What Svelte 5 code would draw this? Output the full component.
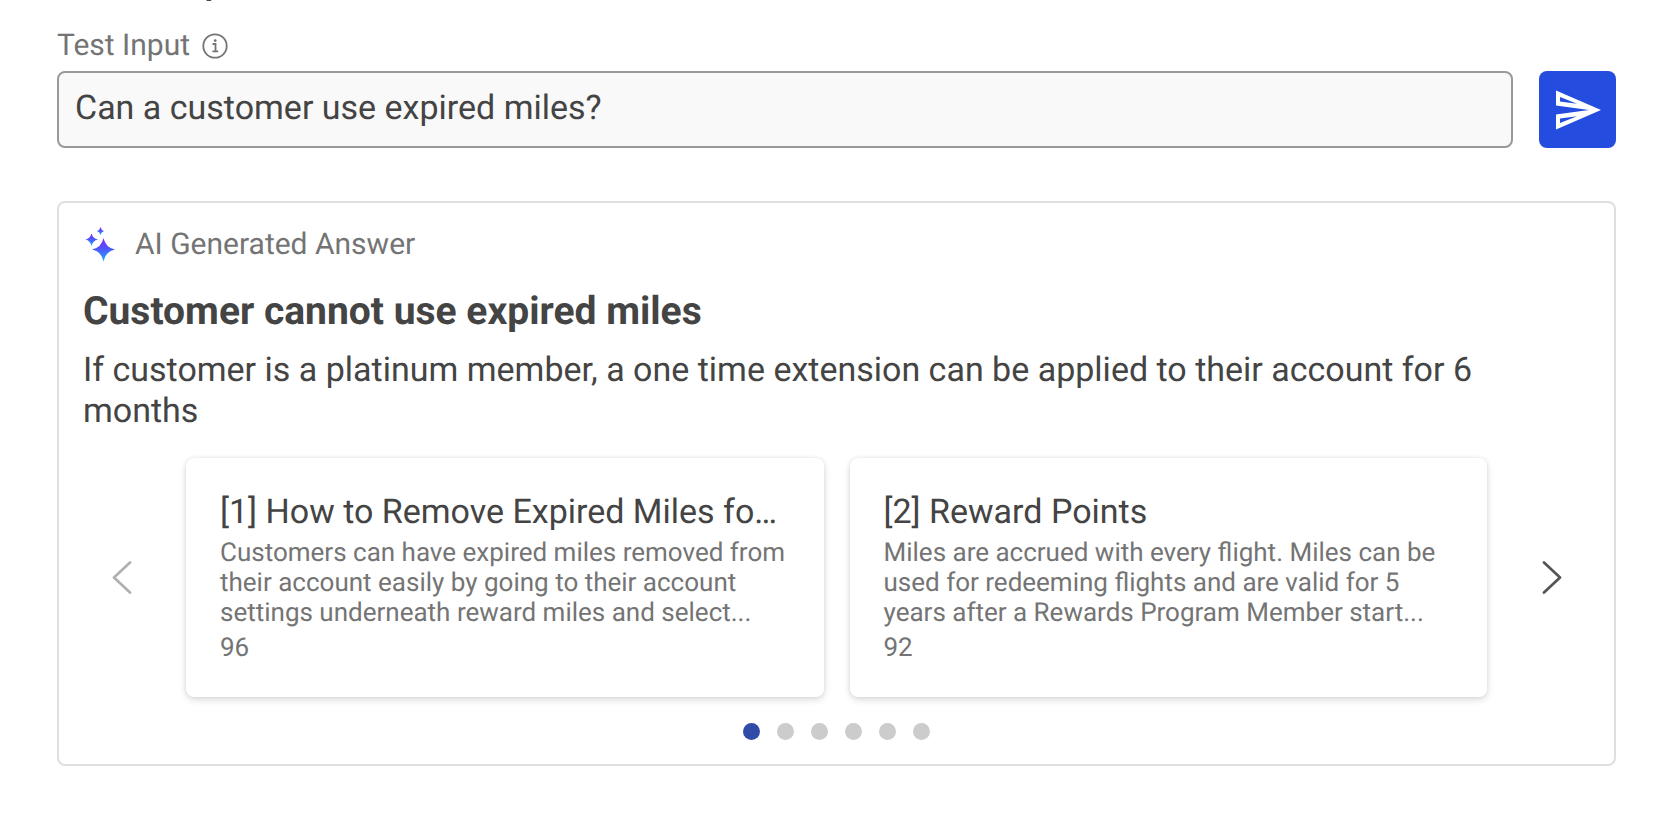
<script lang="ts">
    type Source = {
        title: string;
        summary: string;
        score: number;
    };

    const sources: Source[] = [
        {
            title: "How to Remove Expired Miles fo…",
            summary:
                "Customers can have expired miles removed from their account easily by going to their account settings underneath reward miles and select...",
            score: 96,
        },
        {
            title: "Reward Points",
            summary:
                "Miles are accrued with every flight. Miles can be used for redeeming flights and are valid for 5 years after a Rewards Program Member start...",
            score: 92,
        },
    ];

    const pages = [1, 2, 3, 4, 5, 6];

    let question = $state("Can a customer use expired miles?");
    let page = $state(1);
</script>

<main>
    <div class="heading"><h1>Test Response</h1></div>

    <div class="label-row">
        <label for="question">Test Input</label>
        <svg class="info" viewBox="0 0 26 26" aria-hidden="true">
            <circle cx="13" cy="13" r="11.7" />
            <path d="M10.6 11h2.9v7M10.4 18.4h5.8" />
            <circle class="dot" cx="13.2" cy="7.6" r="1.4" />
        </svg>
    </div>

    <form onsubmit={(e) => e.preventDefault()}>
        <input id="question" type="text" bind:value={question} />
        <button class="send" type="submit" aria-label="Send">
            <svg viewBox="0 0 46 40" aria-hidden="true">
                <path
                    fill-rule="evenodd"
                    d="M1 0.5 46 20 1 39.500V24.500L34 20 1 15.500ZM5 7V11.500L22 13.700ZM5 33V28.500L22 26.300Z"
                />
            </svg>
        </button>
    </form>

    <section class="answer">
        <div class="answer-label">
            <svg class="sparkles" viewBox="0 0 32 36" aria-hidden="true">
                <defs>
                    <linearGradient id="spark" x1="0" y1="0" x2="0" y2="1">
                        <stop offset="0.1" stop-color="#7a2cf3" />
                        <stop offset="0.5" stop-color="#4a5cfb" />
                        <stop offset="0.95" stop-color="#1fa8fb" />
                    </linearGradient>
                </defs>
                <path d="M20.500 11Q22.500 20.500 32 22.500 22.500 24.500 20.500 34.500 18.500 24.500 9 22.500 18.500 20.500 20.500 11Z" />
                <path d="M8.500 6.500Q9.800 11.500 15 12.500 9.800 13.500 8.500 19 7.200 13.500 2.500 12.500 7.200 11.500 8.500 6.500Z" />
                <path d="M17.500 0Q18.200 3.200 21 4 18.200 4.800 17.500 8 16.800 4.800 14 4 16.800 3.200 17.500 0Z" />
            </svg>
            <span>AI Generated Answer</span>
        </div>

        <h2>Customer cannot use expired miles</h2>
        <p class="detail">
            If customer is a platinum member, a one time extension can be
            applied to their account for 6 months
        </p>

        <div class="carousel">
            <button
                class="arrow"
                type="button"
                aria-label="Previous"
                disabled={page === 1}
                onclick={() => page--}
            >
                <svg viewBox="0 0 20 34" aria-hidden="true">
                    <path d="M18 1.500 2 16.500 18 31.500" />
                </svg>
            </button>
            <div class="cards">
                {#each sources as source, i}
                    <article>
                        <h3>[{i + 1}] {source.title}</h3>
                        <p>{source.summary}</p>
                        <div class="score">{source.score}</div>
                    </article>
                {/each}
            </div>
            <button
                class="arrow"
                type="button"
                aria-label="Next"
                disabled={page === pages.length}
                onclick={() => page++}
            >
                <svg viewBox="0 0 20 34" aria-hidden="true">
                    <path d="M2 1.500 18 16.500 2 31.500" />
                </svg>
            </button>
        </div>

        <div class="dots">
            {#each pages as n}
                <button
                    type="button"
                    class:active={n === page}
                    aria-label="Page {n}"
                    onclick={() => (page = n)}
                ></button>
            {/each}
        </div>
    </section>
</main>

<style>
    :global(body) {
        margin: 0;
        background: #fff;
    }

    main {
        padding: 0 44px 48px 57px;
        font-family: Roboto, "Liberation Sans", sans-serif;
        text-rendering: geometricPrecision;
        color: #444;
    }

    h1,
    h2,
    h3,
    p {
        margin: 0;
    }

    button {
        padding: 0;
        border: none;
        background: none;
        cursor: pointer;
    }

    /* the heading is scrolled almost out of view */
    .heading {
        display: flex;
        align-items: flex-end;
        height: 1px;
        overflow: hidden;
        margin-bottom: 27px;
    }

    h1 {
        font-size: 38px;
        font-weight: 500;
        line-height: 38px;
    }

    .label-row {
        display: flex;
        align-items: center;
        gap: 12px;
        margin-bottom: 7px;
        font-size: 30px;
        line-height: 36px;
        color: #747474;
    }

    .info {
        width: 26px;
        height: 26px;
        fill: none;
        stroke: #747474;
        stroke-width: 1.8;
    }

    .info .dot {
        fill: #747474;
        stroke: none;
    }

    form {
        display: flex;
        gap: 26px;
        margin-bottom: 53px;
    }

    input {
        flex: 1;
        min-width: 0;
        box-sizing: border-box;
        height: 77px;
        padding: 0 16px 3px;
        border: 2px solid #999;
        border-radius: 8px;
        background: #f9f9f9;
        font: inherit;
        font-size: 34px;
        text-rendering: inherit;
        color: #444;
    }

    .send {
        display: flex;
        align-items: center;
        justify-content: center;
        width: 77px;
        height: 77px;
        border-radius: 8px;
        background: #244cdf;
    }

    .send svg {
        width: 46px;
        height: 40px;
        fill: #fff;
    }

    .answer {
        padding: 24px;
        border: 2px solid #dfdfdf;
        border-radius: 8px;
    }

    .answer-label {
        display: flex;
        align-items: center;
        gap: 20px;
        margin-bottom: 24px;
        font-size: 30px;
        line-height: 36px;
        color: #747474;
    }

    .sparkles {
        width: 32px;
        height: 36px;
        fill: url(#spark);
    }

    h2 {
        margin-bottom: 15px;
        font-size: 39px;
        font-weight: 700;
        line-height: 48px;
    }

    .detail {
        margin-bottom: 26px;
        font-size: 34px;
        line-height: 41px;
    }

    .carousel {
        display: flex;
        align-items: center;
        gap: 26px;
        margin-bottom: 26px;
    }

    .arrow {
        display: flex;
        justify-content: center;
        flex: none;
        width: 77px;
        padding: 20px 0;
    }

    .arrow svg {
        width: 20px;
        height: 34px;
        fill: none;
        stroke: #555;
        stroke-width: 2.7;
        stroke-linecap: round;
        stroke-linejoin: round;
    }

    .arrow:disabled svg {
        stroke: #b0b0b0;
    }

    .cards {
        display: grid;
        grid-template-columns: repeat(2, minmax(0, 1fr));
        gap: 26px;
        flex: 1;
        min-width: 0;
    }

    article {
        padding: 34px;
        border-radius: 8px;
        background: #fff;
        box-shadow:
            0 0 4px rgba(0, 0, 0, 0.08),
            0 3px 7px rgba(30, 30, 60, 0.14);
    }

    h3 {
        overflow: hidden;
        margin-bottom: 5px;
        font-size: 34px;
        font-weight: 400;
        line-height: 41px;
        white-space: nowrap;
        text-overflow: ellipsis;
    }

    article p,
    .score {
        font-size: 26px;
        line-height: 30px;
        color: #747474;
    }

    .score {
        margin-top: 5px;
    }

    .dots {
        display: flex;
        justify-content: center;
        gap: 17px;
    }

    .dots button {
        width: 17px;
        height: 17px;
        border-radius: 50%;
        background: #ccc;
    }

    .dots button.active {
        background: #304ca8;
    }
</style>
